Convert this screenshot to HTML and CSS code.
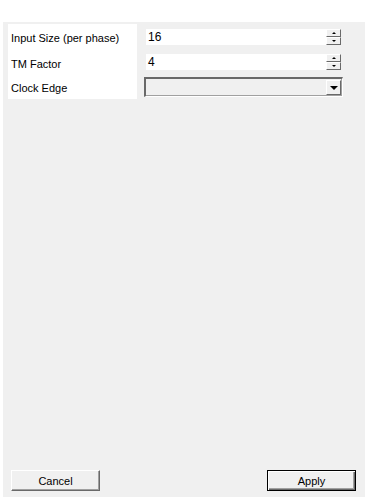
FILE: index.html
```html
<!DOCTYPE html>
<html lang="en">
<head>
    <meta charset="UTF-8">
    <meta name="viewport" content="width=device-width, initial-scale=1.0">
    <title>Settings</title>
    <link rel="stylesheet" href="styles.css">
</head>
<body>
    <div class="panel">
        <div class="form">
            <!-- Labels -->
            <div class="labels">
                <div class="label">Input Size (per phase)</div>
                <div class="label">TM Factor</div>
                <div class="label">Clock Edge</div>
            </div>
            <!-- Fields -->
            <div class="fields">
                <div class="spin-row">
                    <div class="num">16</div>
                    <div class="spin">
                        <div class="spin-btn"><span class="arr up"></span></div>
                        <div class="spin-btn"><span class="arr down"></span></div>
                    </div>
                </div>
                <div class="spin-row">
                    <div class="num">4</div>
                    <div class="spin">
                        <div class="spin-btn"><span class="arr up"></span></div>
                        <div class="spin-btn"><span class="arr down"></span></div>
                    </div>
                </div>
                <div class="combo">
                    <div class="combo-text"></div>
                    <div class="combo-btn"><span class="arr big"></span></div>
                </div>
            </div>
        </div>
        <div class="actions">
            <button class="btn">Cancel</button>
            <button class="btn default">Apply</button>
        </div>
    </div>
</body>
</html>
```

FILE: styles.css
```css
body {
    margin: 0;
    padding: 0;
    background: #fff;
    font-family: 'Liberation Sans', Arial, sans-serif;
    font-size: 11px;
    color: #000;
}
.panel {
    margin: 22px 3px 0 3px;
    height: 475px;
    background: #f0f0f0;
    display: flex;
    flex-direction: column;
    justify-content: space-between;
}
.form {
    display: flex;
    padding: 2px 0 0 5px;
    gap: 7px;
}
.labels {
    width: 126px;
    height: 75px;
    background: #fff;
    padding-left: 3px;
    display: flex;
    flex-direction: column;
}
.label {
    height: 24px;
    line-height: 14px;
    padding-top: 7px;
    box-sizing: border-box;
}
.label:first-child { height: 26px; }
.fields {
    width: 199px;
    display: flex;
    flex-direction: column;
    padding-top: 5px;
}
.spin-row {
    display: flex;
    height: 16px;
    margin-left: 2px;
    margin-bottom: 9px;
}
.spin-row + .spin-row { margin-bottom: 7px; }
.num {
    width: 180px;
    background: #fff;
    line-height: 16px;
    font-size: 12px;
    padding-left: 2px;
    box-sizing: border-box;
}
.spin {
    width: 15px;
    display: flex;
    flex-direction: column;
}
.spin-btn {
    height: 8px;
    box-sizing: border-box;
    background: #f0f0f0;
    border-top: 1px solid #fff;
    border-left: 1px solid #fff;
    border-right: 1px solid #696969;
    border-bottom: 1px solid #696969;
    display: flex;
    align-items: center;
    justify-content: center;
}
.arr {
    width: 0;
    height: 0;
    border-left: 2px solid transparent;
    border-right: 2px solid transparent;
}
.arr.up { border-bottom: 2px solid #000; }
.arr.down { border-top: 2px solid #000; }
.arr.big {
    border-left-width: 4px;
    border-right-width: 4px;
    border-top: 4px solid #000;
}
.combo {
    height: 20px;
    box-sizing: border-box;
    display: flex;
    background: #f0f0f0;
    border-top: 2px solid #696969;
    border-left: 2px solid #696969;
    border-right: 1px solid #fff;
    border-bottom: 1px solid #fff;
    box-shadow: -1px -1px 0 #a0a0a0 inset;
}
.combo-text { flex: 1; }
.combo-btn {
    width: 15px;
    margin: 1px 1px 1px 0;
    box-sizing: border-box;
    background: #f0f0f0;
    border-top: 1px solid #fff;
    border-left: 1px solid #fff;
    border-right: 1px solid #696969;
    border-bottom: 1px solid #696969;
    display: flex;
    align-items: center;
    justify-content: center;
}
.actions {
    display: flex;
    justify-content: space-between;
    padding: 0 9px 6px 8px;
}
.btn {
    width: 89px;
    height: 21px;
    margin: 0;
    padding: 0;
    font-family: 'Liberation Sans', Arial, sans-serif;
    font-size: 11px;
    color: #000;
    background: #f0f0f0;
    border-top: 1px solid #fff;
    border-left: 1px solid #fff;
    border-right: 1px solid #696969;
    border-bottom: 1px solid #696969;
    box-shadow: -1px -1px 0 #a0a0a0 inset;
}
.btn.default {
    border: 1px solid #000;
    box-shadow: 1px 1px 0 #fff inset, -1px -1px 0 #696969 inset, -2px -2px 0 #a0a0a0 inset;
}
```
